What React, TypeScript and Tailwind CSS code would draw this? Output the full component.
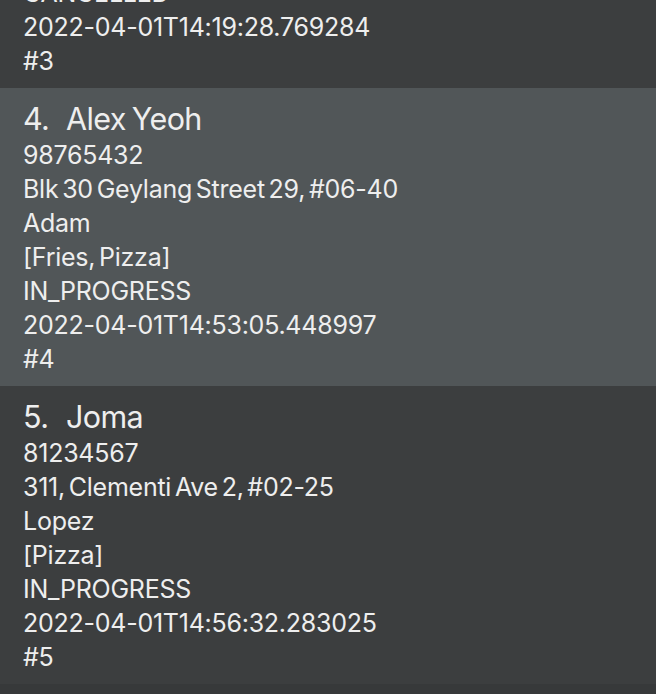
const orders = [
  {
    id: 3,
    name: "Charlotte Oliveiro",
    phone: "93210283",
    address: "Blk 11 Ang Mo Kio Street 74, #11-04",
    staff: "Bernice",
    items: "[Burger]",
    status: "CANCELLED",
    time: "2022-04-01T14:19:28.769284",
  },
  {
    id: 4,
    name: "Alex Yeoh",
    phone: "98765432",
    address: "Blk 30 Geylang Street 29, #06-40",
    staff: "Adam",
    items: "[Fries, Pizza]",
    status: "IN_PROGRESS",
    time: "2022-04-01T14:53:05.448997",
  },
  {
    id: 5,
    name: "Joma",
    phone: "81234567",
    address: "311, Clementi Ave 2, #02-25",
    staff: "Lopez",
    items: "[Pizza]",
    status: "IN_PROGRESS",
    time: "2022-04-01T14:56:32.283025",
  },
];

const App = () => {
  const selected = 4;

  return (
    <div
      className="h-[694px] w-[656px] overflow-hidden bg-[#37393a] text-[#eeeeee]"
      style={{ fontFamily: "Inter, 'Noto Sans', sans-serif" }}
    >
      <div className="-mt-[210px] flex flex-col">
        {orders.map((order) => (
          <div
            key={order.id}
            className={`flex h-[298px] flex-col pl-[23px] pt-[12px] [word-spacing:-3px] ${
              order.id === selected ? "bg-[#515658]" : "bg-[#3c3e3f]"
            }`}
          >
            <div className="flex h-[38px] items-center text-[30.5px] tracking-[-0.02em] [word-spacing:-2px]">
              <span className="w-[43px]">{order.id}.</span>
              <span>{order.name}</span>
            </div>
            {[
              order.phone,
              order.address,
              order.staff,
              order.items,
              order.status,
              order.time,
              `#${order.id}`,
            ].map((line, i) => (
              <div key={i} className="flex h-[34px] items-center pt-[1px] text-[25px] tracking-[-0.01em]">
                {line}
              </div>
            ))}
          </div>
        ))}
      </div>
    </div>
  );
};

export default App;
